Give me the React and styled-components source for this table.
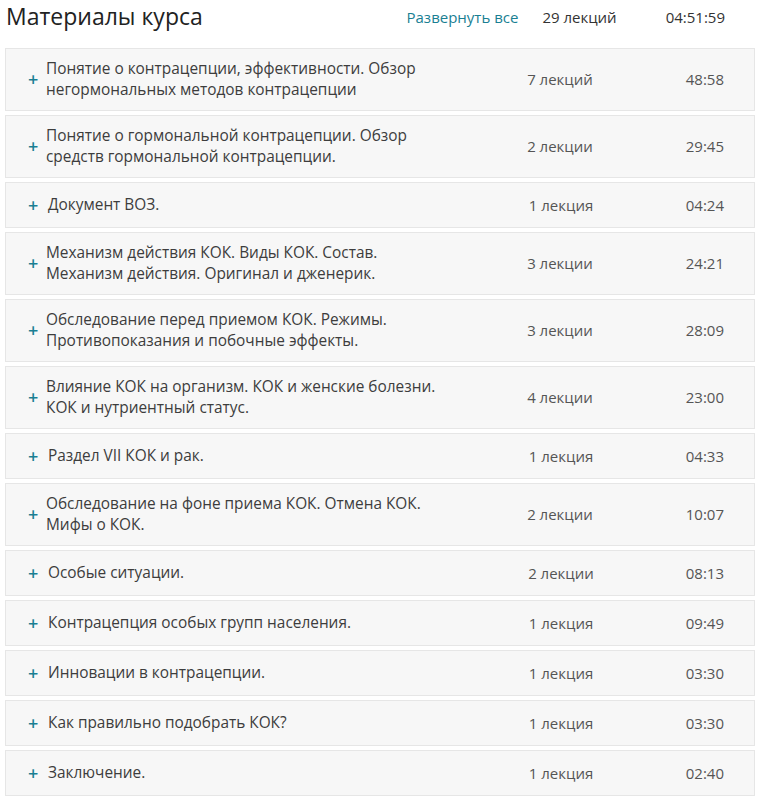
import React from 'react';
import styled, { createGlobalStyle } from 'styled-components';

const GlobalStyle = createGlobalStyle`
  body {
    margin: 0;
    background: #fff;
    font-family: "Open Sans", "Liberation Sans", sans-serif;
  }
`;

const Page = styled.div`
  padding: 0 5px;
  width: 750px;
`;

const Header = styled.div`
  display: flex;
  align-items: center;
  height: 34px;
  margin-bottom: 14px;
  padding-right: 30px;
`;

const Heading = styled.h2`
  flex: 1;
  margin: -3px 0 0 1px;
  font-size: 23px;
  font-weight: 400;
  color: #222;
  line-height: 26px;
`;

const ExpandLink = styled.a`
  color: #1a7f93;
  font-size: 15px;
  text-decoration: none;
  cursor: pointer;
  margin-right: 24px;
`;

const TotalCount = styled.span`
  color: #333;
  font-size: 15px;
`;

const TotalTime = styled.span`
  color: #333;
  font-size: 15px;
  margin-left: 49px;
`;

const List = styled.div`
  display: flex;
  flex-direction: column;
  gap: 4px;
`;

const Row = styled.div`
  display: flex;
  align-items: center;
  min-height: 24px;
  padding: 10px 30px 10px 22px;
  background: #f7f7f7;
  border: 1px solid #e6e6e6;
  font-size: 15px;
  line-height: 20.5px;
  cursor: pointer;
`;

const Plus = styled.span`
  width: ${p => (p.$single ? 20 : 18)}px;
  flex-shrink: 0;
  color: #1a7f93;
  font-size: 18px;
  font-weight: 600;
`;

const Title = styled.div`
  width: 402px;
  color: #3d3d3d;
  font-size: 15.4px;
`;

const Count = styled.div`
  flex: 1;
  text-align: center;
  padding-left: 48px;
  color: #555;
`;

const Duration = styled.div`
  width: 100px;
  text-align: right;
  color: #555;
`;

const sections = [
  ['Понятие о контрацепции, эффективности. Обзор негормональных методов контрацепции', '7 лекций', '48:58'],
  ['Понятие о гормональной контрацепции. Обзор средств гормональной контрацепции.', '2 лекции', '29:45'],
  ['Документ ВОЗ.', '1 лекция', '04:24', true],
  ['Механизм действия КОК. Виды КОК. Состав. Механизм действия. Оригинал и дженерик.', '3 лекции', '24:21'],
  ['Обследование перед приемом КОК. Режимы. Противопоказания и побочные эффекты.', '3 лекции', '28:09'],
  ['Влияние КОК на организм. КОК и женские болезни. КОК и нутриентный статус.', '4 лекции', '23:00'],
  ['Раздел VII КОК и рак.', '1 лекция', '04:33', true],
  ['Обследование на фоне приема КОК. Отмена КОК. Мифы о КОК.', '2 лекции', '10:07'],
  ['Особые ситуации.', '2 лекции', '08:13', true],
  ['Контрацепция особых групп населения.', '1 лекция', '09:49', true],
  ['Инновации в контрацепции.', '1 лекция', '03:30', true],
  ['Как правильно подобрать КОК?', '1 лекция', '03:30', true],
  ['Заключение.', '1 лекция', '02:40', true],
];

export default function App() {
  return (
    <Page>
      <GlobalStyle />
      <Header>
        <Heading>Материалы курса</Heading>
        <ExpandLink>Развернуть все</ExpandLink>
        <TotalCount>29 лекций</TotalCount>
        <TotalTime>04:51:59</TotalTime>
      </Header>
      <List>
        {sections.map(([title, count, time, single]) => (
          <Row key={title}>
            <Plus $single={single}>+</Plus>
            <Title>{title}</Title>
            <Count>{count}</Count>
            <Duration>{time}</Duration>
          </Row>
        ))}
      </List>
    </Page>
  );
}
